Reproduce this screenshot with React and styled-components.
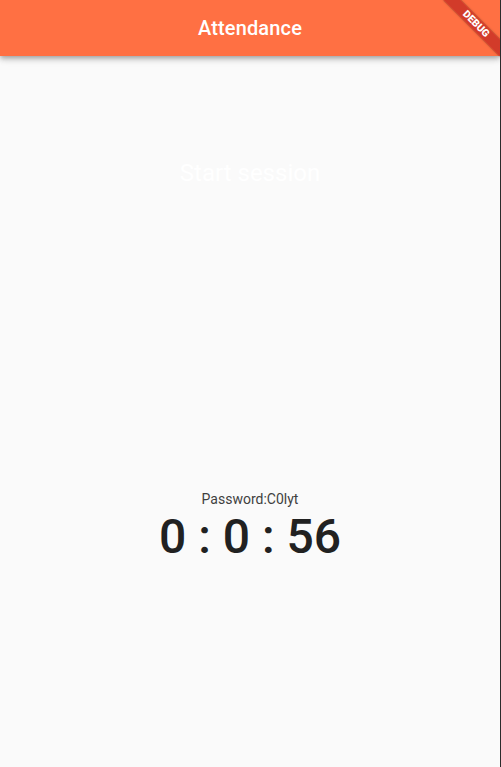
import React from "react";
import styled, { createGlobalStyle } from "styled-components";

const Global = createGlobalStyle`
  html, body { margin: 0; padding: 0; background: #fafafa; }
  body { font-family: Roboto, "Noto Sans", "Liberation Sans", sans-serif; }
`;

const Screen = styled.div`
  position: relative;
  width: 500px;
  height: 767px;
  background: #fafafa;
  border-right: 1px solid #2b2b2b;
  overflow: hidden;
  display: flex;
  flex-direction: column;
`;

const AppBar = styled.header`
  height: 56px;
  flex: none;
  background: #ff7043;
  display: flex;
  align-items: center;
  justify-content: center;
  box-shadow: 0 2px 4px -1px rgba(0,0,0,0.2), 0 4px 5px 0 rgba(0,0,0,0.14), 0 1px 10px 0 rgba(0,0,0,0.12);
  position: relative;
  z-index: 1;
`;

const Title = styled.h1`
  margin: 0;
  color: #fff;
  font-size: 20px;
  font-weight: 500;
  letter-spacing: 0.15px;
`;

const Body = styled.main`
  flex: 1;
  display: flex;
  flex-direction: column;
  align-items: center;
`;

const StartButton = styled.button`
  margin-top: 103px;
  background: transparent;
  border: none;
  padding: 0;
  color: #fff;
  font-family: inherit;
  font-size: 24px;
  line-height: 28px;
  font-weight: 400;
`;

const Password = styled.div`
  margin-top: 302px;
  color: #3f3f3f;
  font-size: 14px;
  line-height: 20px;
`;

const Timer = styled.div`
  color: #212121;
  font-size: 48px;
  line-height: 56px;
  font-weight: 500;
`;

const Banner = styled.div`
  position: absolute;
  top: 18px;
  right: -16px;
  width: 80px;
  height: 12px;
  transform: rotate(45deg);
  background: rgba(183, 28, 28, 0.63);
  box-shadow: 0 0 2px rgba(0,0,0,0.5);
  color: #fff;
  font-size: 10.2px;
  font-weight: 900;
  line-height: 12px;
  text-align: center;
  letter-spacing: 0;
  z-index: 2;
`;

export default function App() {
  return (
    <>
      <Global />
      <Screen>
        <AppBar>
          <Title>Attendance</Title>
        </AppBar>
        <Body>
          <StartButton>Start session</StartButton>
          <Password>Password:C0lyt</Password>
          <Timer>0 : 0 : 56</Timer>
        </Body>
        <Banner>DEBUG</Banner>
      </Screen>
    </>
  );
}
